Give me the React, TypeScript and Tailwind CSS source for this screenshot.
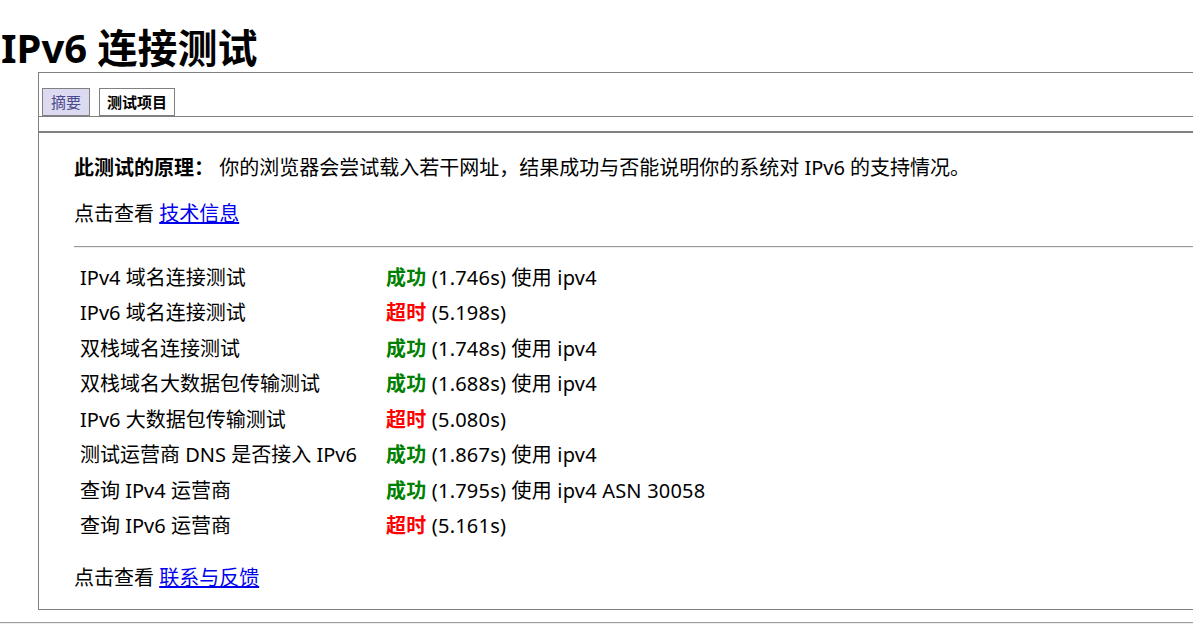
const rows: { name: string; ok: boolean; time: string; extra?: string }[] = [
  { name: 'IPv4 域名连接测试', ok: true, time: '1.746s', extra: '使用 ipv4' },
  { name: 'IPv6 域名连接测试', ok: false, time: '5.198s' },
  { name: '双栈域名连接测试', ok: true, time: '1.748s', extra: '使用 ipv4' },
  { name: '双栈域名大数据包传输测试', ok: true, time: '1.688s', extra: '使用 ipv4' },
  { name: 'IPv6 大数据包传输测试', ok: false, time: '5.080s' },
  { name: '测试运营商 DNS 是否接入 IPv6', ok: true, time: '1.867s', extra: '使用 ipv4' },
  { name: '查询 IPv4 运营商', ok: true, time: '1.795s', extra: '使用 ipv4 ASN 30058' },
  { name: '查询 IPv6 运营商', ok: false, time: '5.161s' },
];

export default function App() {
  return (
    <div
      className="h-[634px] w-[1193px] overflow-hidden bg-white text-black"
      style={{ fontFamily: '"Noto Sans", "Noto Sans CJK SC", sans-serif' }}
    >
      {/* Title */}
      <h1 className="pl-[1px] pt-[24px] text-[40px] font-bold leading-[48px]">IPv6 连接测试</h1>

      {/* Tab box */}
      <div className="ml-[38px] border-b border-l border-t border-[#808080]">
        <div className="flex gap-[9px] pl-[3px] pt-[15px]">
          <div className="flex h-[28px] items-center border border-[#808080] bg-[#dcdaf0] px-[8px] text-[15px] text-[#4b4a8e]">
            摘要
          </div>
          <div className="flex h-[28px] items-center border border-[#808080] bg-white px-[7px] text-[15px] font-bold">
            测试项目
          </div>
        </div>
        <div className="border-t border-[#808080]" />
        <div className="h-[14px]" />
        <div className="border-t-2 border-[#808080]" />

        {/* Summary panel */}
        <div className="pl-[35px] pt-[20px] pb-[16px] text-[20px] leading-[30px]">
          <p>
            <b>此测试的原理：</b> 你的浏览器会尝试载入若干网址，结果成功与否能说明你的系统对 IPv6 的支持情况。
          </p>
          <p className="mt-[16px]">
            点击查看 <a className="text-[#0000ee] underline">技术信息</a>
          </p>
          <div className="mt-[17px] border-b border-t border-b-[#eeeeee] border-t-[#999999]" />
          <div className="mt-[12px]">
            {rows.map((r) => (
              <div key={r.name} className="flex h-[35.5px] items-center">
                <div className="w-[312px] pl-[6px]">{r.name}</div>
                <div className="tracking-[0.2px]">
                  <b className={r.ok ? 'text-[#008000]' : 'text-[#ff0000]'}>{r.ok ? '成功' : '超时'}</b> ({r.time})
                  {r.extra ? ` ${r.extra}` : ''}
                </div>
              </div>
            ))}
          </div>
          <p className="mt-[19px]">
            点击查看 <a className="text-[#0000ee] underline">联系与反馈</a>
          </p>
        </div>
      </div>

      <div className="mt-[12px] border-b border-t border-b-[#eeeeee] border-t-[#a0a0a0]" />
    </div>
  );
}
